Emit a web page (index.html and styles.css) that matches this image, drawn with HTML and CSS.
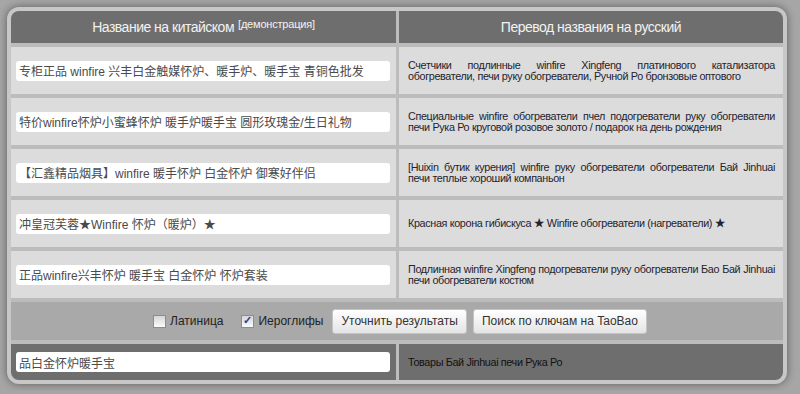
FILE: index.html
```html
<!DOCTYPE html>
<html>
<head>
  <meta charset="utf-8">
  <title>Перевод названий</title>
<link rel="stylesheet" href="styles.css">
</head>
<body>

<div class="board">
  <div class="head">Название на китайском <sup>[демонстрация]</sup></div>
  <div class="head">Перевод названия на русский</div>

  <div class="cell"><input type="text" class="cn" value="专柜正品 winfire 兴丰白金触媒怀炉、暖手炉、暖手宝 青铜色批发"></div>
  <div class="cell ru"><p><span class="l1">Счетчики подлинные winfire Xingfeng платинового катализатора</span> обогреватели, печи руку обогреватели, Ручной Ро бронзовые оптового</p></div>

  <div class="cell"><input type="text" class="cn" value="特价winfire怀炉小蜜蜂怀炉 暖手炉暖手宝 圆形玫瑰金/生日礼物"></div>
  <div class="cell ru"><p><span class="l1">Специальные winfire обогреватели пчел подогреватели руку обогреватели</span> печи Рука Ро круговой розовое золото / подарок на день рождения</p></div>

  <div class="cell"><input type="text" class="cn" value="【汇鑫精品烟具】winfire 暖手怀炉 白金怀炉 御寒好伴侣"></div>
  <div class="cell ru"><p><span class="l1">[Huixin бутик курения] winfire руку обогреватели обогреватели Бай Jinhuai</span> печи теплые хороший компаньон</p></div>

  <div class="cell"><input type="text" class="cn" value="冲皇冠芙蓉★Winfire 怀炉（暖炉）★"></div>
  <div class="cell ru"><p>Красная корона гибискуса ★ Winfire обогреватели (нагреватели) ★</p></div>

  <div class="cell"><input type="text" class="cn" value="正品winfire兴丰怀炉 暖手宝 白金怀炉 怀炉套装"></div>
  <div class="cell ru"><p><span class="l1">Подлинная winfire Xingfeng подогреватели руку обогреватели Бао Бай Jinhuai</span> печи обогреватели костюм</p></div>

  <div class="controls">
    <label class="opt"><input type="checkbox" class="box"> Латиница</label>
    <label class="opt"><input type="checkbox" class="box" checked> Иероглифы</label>
    <button>Уточнить результаты</button>
    <button>Поиск по ключам на TaoBao</button>
  </div>

  <div class="cell dark"><input type="text" class="cn" value="品白金怀炉暖手宝"></div>
  <div class="cell ru dark"><p>Товары Бай Jinhuai печи Рука Ро</p></div>
</div>

</body>
</html>
```

FILE: styles.css
```css
body {
  margin: 0;
  padding: 7px;
  background-color: #a6a6a6;
  font-family: "Liberation Sans", Arial, "Noto Sans CJK SC", sans-serif;
}

.board {
  display: grid;
  grid-template-columns: 385px 384px;
  grid-template-rows: 32px repeat(5, 47px) 38px 36px;
  gap: 4px 3px;
  width: 780px;
  box-sizing: border-box;
  border: 4px solid #c7c7c7;
  border-radius: 12px;
  background-color: #bcbcbc;
  box-shadow: 0 0 9px rgba(0, 0, 0, 0.45);
  overflow: hidden;
}

.head {
  background-color: #6e6e6e;
  color: #f2f2f2;
  font-size: 14px;
  letter-spacing: -0.5px;
  display: flex;
  align-items: center;
  justify-content: center;
}
.head sup {
  font-size: 11px;
  letter-spacing: -0.2px;
  margin-left: 4px;
  position: relative;
  top: -3px;
}

.cell {
  background-color: #dcdcdc;
  display: flex;
  align-items: center;
  padding: 0 6px 0 5px;
}

.cell.ru {
  padding: 0 8px 0 9px;
  font-size: 10.8px;
  line-height: 11px;
  letter-spacing: -0.35px;
  color: #23232f;
}
.cell.ru p {
  margin: 0;
  width: 100%;
}
.cell.ru .l1 {
  display: block;
  white-space: nowrap;
  text-align: justify;
  text-align-last: justify;
}

.cell.dark {
  background-color: #6e6e6e;
  color: #111;
}

input.cn {
  width: 100%;
  height: 20px;
  box-sizing: border-box;
  border: 0;
  border-radius: 3px;
  padding: 0 3px;
  background-color: #fff;
  color: #4a4a4a;
  font-size: 12px;
  font-family: "Liberation Sans", Arial, "Noto Sans CJK SC", sans-serif;
  outline: none;
}

.controls {
  grid-column: 1 / 3;
  background-color: #a9a9a9;
  display: flex;
  align-items: center;
  justify-content: center;
  padding-left: 12px;
}

.opt {
  display: flex;
  align-items: center;
  gap: 4px;
  font-size: 12px;
  color: #222;
  margin-right: 18px;
}
.opt:last-of-type {
  margin-right: 9px;
}

input.box {
  appearance: none;
  margin: 0;
  width: 13px;
  height: 13px;
  border: 1px solid #8d8d8d;
  background: linear-gradient(#d6d6d6, #fbfbfb);
  position: relative;
}
input.box:checked::after {
  content: "✓";
  position: absolute;
  left: 1px;
  top: -2px;
  font-size: 11px;
  font-weight: bold;
  color: #2b3d9c;
}

button {
  height: 25px;
  margin-right: 6px;
  padding: 0 8px;
  font-size: 12px;
  font-family: "Liberation Sans", Arial, sans-serif;
  color: #333;
  background: linear-gradient(#ffffff, #e4e4e4);
  border: 1px solid #c4c4c4;
  border-radius: 3px;
  cursor: pointer;
}
```
